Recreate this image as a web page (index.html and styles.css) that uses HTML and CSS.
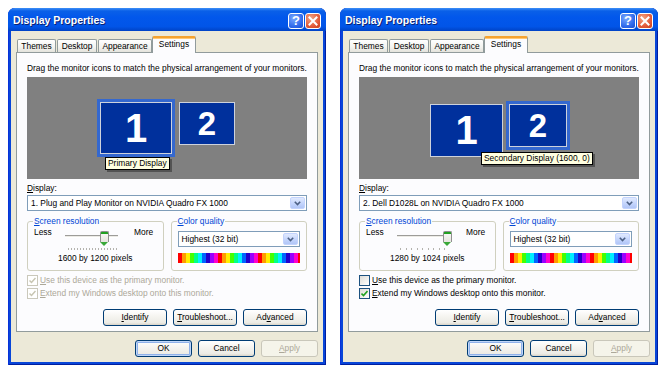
FILE: index.html
```html
<!DOCTYPE html>
<html lang="en">
  <head>
    <meta charset="UTF-8" />
    <title>Display Properties</title>
    <link rel="stylesheet" href="styles.css">
  </head>
  <body>
    <div class="screen">

      <!-- Primary display selected -->
      <div class="dialog">
        <div class="titlebar">
          <span class="title">Display Properties</span>
          <span class="tbtn help">?</span>
          <span class="tbtn close">
            <svg width="10" height="10" viewBox="0 0 10 10"><path d="M1.5 1.5l7 7M8.5 1.5l-7 7" stroke="#fff" stroke-width="2" stroke-linecap="square"/></svg>
          </span>
        </div>
        <div class="client">
          <div class="tabs">
            <span class="tab t-themes">Themes</span>
            <span class="tab t-desktop">Desktop</span>
            <span class="tab t-appear">Appearance</span>
            <span class="tab t-settings active">Settings</span>
          </div>
          <div class="panel">
            <p class="hint">Drag the monitor icons to match the physical arrangement of your monitors.</p>
            <div class="arrange">
              <div class="mon big sel a-m1">1</div>
              <div class="mon small a-m2">2</div>
              <div class="tip a-tip">Primary Display</div>
            </div>
            <div class="field-label"><u>D</u>isplay:</div>
            <div class="combo">
              <span class="combo-text">1. Plug and Play Monitor on NVIDIA Quadro FX 1000</span>
              <span class="drop"><svg width="7" height="5" viewBox="0 0 7 5"><path d="M0.8 0.8l2.7 2.7 2.7-2.7" fill="none" stroke="#4d6185" stroke-width="1.6"/></svg></span>
            </div>
            <div class="groups">
              <fieldset class="group">
                <legend><u>S</u>creen resolution</legend>
                <div class="res-row">
                  <span class="less">Less</span>
                  <div class="slider">
                    <span class="track"></span>
                    <span class="thumb th-a"></span>
                    <span class="ticks ticks-fine"></span>
                  </div>
                  <span class="more">More</span>
                </div>
                <div class="pixels">1600 by 1200 pixels</div>
              </fieldset>
              <fieldset class="group">
                <legend><u>C</u>olor quality</legend>
                <div class="combo small-combo">
                  <span class="combo-text">Highest (32 bit)</span>
                  <span class="drop"><svg width="7" height="5" viewBox="0 0 7 5"><path d="M0.8 0.8l2.7 2.7 2.7-2.7" fill="none" stroke="#4d6185" stroke-width="1.6"/></svg></span>
                </div>
                <div class="colorbar"></div>
              </fieldset>
            </div>
            <div class="check off">
              <span class="box"><svg width="7" height="7" viewBox="0 0 7 7"><path d="M0.5 3.5l2 2 4-4.5" fill="none" stroke="#c7c5b2" stroke-width="1.5"/></svg></span>
              <span><u>U</u>se this device as the primary monitor.</span>
            </div>
            <div class="check off">
              <span class="box"><svg width="7" height="7" viewBox="0 0 7 7"><path d="M0.5 3.5l2 2 4-4.5" fill="none" stroke="#c7c5b2" stroke-width="1.5"/></svg></span>
              <span><u>E</u>xtend my Windows desktop onto this monitor.</span>
            </div>
            <div class="panel-buttons">
              <span class="btn wide"><u>I</u>dentify</span>
              <span class="btn wide"><u>T</u>roubleshoot...</span>
              <span class="btn wide">Ad<u>v</u>anced</span>
            </div>
          </div>
          <div class="dialog-buttons">
            <span class="btn default">OK</span>
            <span class="btn">Cancel</span>
            <span class="btn disabled"><u>A</u>pply</span>
          </div>
        </div>
      </div>

      <!-- Secondary display selected -->
      <div class="dialog">
        <div class="titlebar">
          <span class="title">Display Properties</span>
          <span class="tbtn help">?</span>
          <span class="tbtn close">
            <svg width="10" height="10" viewBox="0 0 10 10"><path d="M1.5 1.5l7 7M8.5 1.5l-7 7" stroke="#fff" stroke-width="2" stroke-linecap="square"/></svg>
          </span>
        </div>
        <div class="client">
          <div class="tabs">
            <span class="tab t-themes">Themes</span>
            <span class="tab t-desktop">Desktop</span>
            <span class="tab t-appear">Appearance</span>
            <span class="tab t-settings active">Settings</span>
          </div>
          <div class="panel">
            <p class="hint">Drag the monitor icons to match the physical arrangement of your monitors.</p>
            <div class="arrange">
              <div class="mon big b-m1">1</div>
              <div class="mon small sel b-m2">2</div>
              <div class="tip b-tip">Secondary Display (1600, 0)</div>
            </div>
            <div class="field-label"><u>D</u>isplay:</div>
            <div class="combo">
              <span class="combo-text">2. Dell D1028L on NVIDIA Quadro FX 1000</span>
              <span class="drop"><svg width="7" height="5" viewBox="0 0 7 5"><path d="M0.8 0.8l2.7 2.7 2.7-2.7" fill="none" stroke="#4d6185" stroke-width="1.6"/></svg></span>
            </div>
            <div class="groups">
              <fieldset class="group">
                <legend><u>S</u>creen resolution</legend>
                <div class="res-row">
                  <span class="less">Less</span>
                  <div class="slider">
                    <span class="track"></span>
                    <span class="thumb th-b"></span>
                    <span class="ticks ticks-wide"></span>
                  </div>
                  <span class="more">More</span>
                </div>
                <div class="pixels">1280 by 1024 pixels</div>
              </fieldset>
              <fieldset class="group">
                <legend><u>C</u>olor quality</legend>
                <div class="combo small-combo">
                  <span class="combo-text">Highest (32 bit)</span>
                  <span class="drop"><svg width="7" height="5" viewBox="0 0 7 5"><path d="M0.8 0.8l2.7 2.7 2.7-2.7" fill="none" stroke="#4d6185" stroke-width="1.6"/></svg></span>
                </div>
                <div class="colorbar"></div>
              </fieldset>
            </div>
            <div class="check">
              <span class="box"></span>
              <span><u>U</u>se this device as the primary monitor.</span>
            </div>
            <div class="check">
              <span class="box"><svg width="7" height="7" viewBox="0 0 7 7"><path d="M0.5 3.5l2 2 4-4.5" fill="none" stroke="#21a121" stroke-width="1.6"/></svg></span>
              <span><u>E</u>xtend my Windows desktop onto this monitor.</span>
            </div>
            <div class="panel-buttons">
              <span class="btn wide"><u>I</u>dentify</span>
              <span class="btn wide"><u>T</u>roubleshoot...</span>
              <span class="btn wide">Ad<u>v</u>anced</span>
            </div>
          </div>
          <div class="dialog-buttons">
            <span class="btn default">OK</span>
            <span class="btn">Cancel</span>
            <span class="btn disabled"><u>A</u>pply</span>
          </div>
        </div>
      </div>

    </div>
  </body>
</html>
```

FILE: styles.css
```css
* {
  box-sizing: border-box;
}
body {
  margin: 0;
  background: #fff;
  color: #000;
  font: 8.4px/11px "Liberation Sans", Arial, sans-serif;
}
u {
  text-decoration: underline;
  text-underline-offset: 1px;
}
.screen {
  display: flex;
  gap: 14px;
  padding: 8px;
}

/* Window frame */
.dialog {
  width: 318px;
  height: 357px;
  display: flex;
  flex-direction: column;
  padding: 0 3px 3px;
  background: #0846d8;
  border-radius: 7px 7px 0 0;
  box-shadow: inset 1px 0 #0831d9, inset -1px 0 #001ea0, inset 0 -1px #001ea0;
}
.titlebar {
  height: 23px;
  margin: 0 -3px;
  padding: 0 5px 0 5px;
  display: flex;
  align-items: center;
  border-radius: 7px 7px 0 0;
  background: linear-gradient(#3d8ff7, #0a60e8 3px, #0257eb 40%, #0155e8 80%, #0043c6);
}
.title {
  flex: 1;
  padding-top: 2px;
  color: #fff;
  font-size: 10.5px;
  font-weight: bold;
  text-shadow: 1px 1px #0b2172;
}
.tbtn {
  width: 16px;
  height: 16px;
  margin-left: 1px;
  margin-top: 2px;
  display: flex;
  align-items: center;
  justify-content: center;
  border: 1px solid #fff;
  border-radius: 3px;
}
.help {
  color: #fff;
  font-size: 13px;
  font-weight: bold;
  background: radial-gradient(circle at 35% 30%, #7aa9ff, #2d67ea 65%, #1a4ccc);
}
.close {
  background: radial-gradient(circle at 35% 30%, #f3a483, #e35b3a 60%, #c63e1c);
}

.client {
  flex: 1;
  padding: 5px 5px 0;
  background: #ece9d8;
}

/* Tabs */
.tabs {
  height: 16px;
  padding-left: 1px;
  display: flex;
  align-items: flex-end;
}
.tab {
  height: 13px;
  margin-right: 1px;
  border: 1px solid #919b9c;
  border-bottom: 0;
  border-radius: 2px 2px 0 0;
  background: linear-gradient(#fff, #f3f3ef 60%, #e4e3dc);
  text-align: center;
  line-height: 12px;
}
.t-themes { width: 39px; }
.t-desktop { width: 40px; }
.t-appear { width: 54px; }
.t-settings { width: 44px; }
.tab.active {
  position: relative;
  z-index: 1;
  height: 17px;
  margin-bottom: -1px;
  margin-left: -1px;
  border-top: 2px solid #f5a330;
  background: #fcfcfe;
  line-height: 13px;
  box-shadow: inset 0 1px #ffc873;
}

.panel {
  height: 280px;
  padding: 0 10px;
  border: 1px solid #919b9c;
  background: #fcfcfe;
}
.hint {
  margin: 10px 0 0;
  white-space: nowrap;
}

/* Monitor arrangement */
.arrange {
  position: relative;
  height: 102px;
  margin-top: 3px;
  background: #808080;
}
.mon {
  position: absolute;
  display: flex;
  align-items: center;
  justify-content: center;
  border: 1px solid #cdd2dc;
  background: #00309c;
  color: #fff;
  font-weight: bold;
}
.mon.big { font-size: 40px; }
.mon.small { font-size: 33px; }
.mon.sel {
  box-shadow: 0 0 0 3px #3468cf;
}
.a-m1 { left: 73px; top: 25px; width: 72px; height: 52px; }
.a-m2 { left: 152px; top: 25px; width: 56px; height: 43px; }
.b-m1 { left: 71px; top: 27px; width: 73px; height: 53px; }
.b-m2 { left: 150px; top: 27px; width: 58px; height: 43px; }
.tip {
  position: absolute;
  z-index: 2;
  height: 13px;
  padding: 0 2px;
  border: 1px solid #000;
  background: #ffffe1;
  line-height: 11px;
  white-space: nowrap;
  box-shadow: 2px 2px 0 rgba(0, 0, 0, 0.35);
}
.a-tip { left: 78px; top: 80px; }
.b-tip { left: 122px; top: 75px; }

.field-label {
  margin-top: 4px;
}

/* Combo boxes */
.combo {
  height: 16px;
  margin-top: 1px;
  padding: 0 1px 0 3px;
  display: flex;
  align-items: center;
  border: 1px solid #7f9db9;
  background: #fff;
}
.combo-text {
  flex: 1;
}
.drop {
  width: 15px;
  height: 12px;
  display: flex;
  align-items: center;
  justify-content: center;
  border: 1px solid #c3d3fd;
  border-radius: 2px;
  background: linear-gradient(#e1eafe, #c2d3fc 60%, #b1c6f7);
}

/* Group boxes */
.groups {
  margin-top: 5px;
  display: flex;
  gap: 7px;
}
.group {
  width: 137px;
  height: 55px;
  margin: 0;
  padding: 0 6px;
  border: 1px solid #d0d0bf;
  border-radius: 3px;
}
.group legend {
  margin-left: -1px;
  padding: 0 1px;
  color: #0046d5;
  line-height: 11px;
}
.res-row {
  display: flex;
  align-items: flex-start;
}
.less {
  width: 31px;
}
.slider {
  position: relative;
  width: 53px;
  height: 22px;
  margin-top: 2px;
}
.track {
  position: absolute;
  left: 0;
  right: 0;
  top: 6px;
  height: 3px;
  border-top: 1px solid #9d9c99;
  border-bottom: 1px solid #fff;
  background: #ecebe6;
}
.thumb {
  position: absolute;
  top: 2px;
  width: 9px;
  height: 11px;
  border: 1px solid #8f8f8f;
  border-bottom: 0;
  border-radius: 2px 2px 0 0;
  background: linear-gradient(#21a121, #21a121 2px, #f6f6f3 2px, #e6e5df);
}
.thumb::after {
  content: "";
  position: absolute;
  left: -1px;
  bottom: -4px;
  border-left: 4.5px solid transparent;
  border-right: 4.5px solid transparent;
  border-top: 4px solid #3aa83a;
}
.th-a { left: 35px; }
.th-b { left: 46px; }
.ticks {
  position: absolute;
  top: 19px;
  left: 3px;
  right: 1px;
  height: 2px;
}
.ticks-fine {
  background: repeating-linear-gradient(to right, #b4b3ae 0 1px, transparent 1px 3px);
}
.ticks-wide {
  background: repeating-linear-gradient(to right, #b4b3ae 0 1px, transparent 1px 5.5px);
}
.more {
  margin-left: 16px;
}
.pixels {
  margin-top: 2px;
  text-align: center;
}
.small-combo {
  margin-top: 4px;
}
.colorbar {
  height: 10px;
  margin-top: 6px;
  background: linear-gradient(to right,
    #ff0000 0 4px, #ff9900 4px 8px, #ffee00 8px 12px, #44ff00 12px 16px,
    #00ff88 16px 20px, #00eeff 20px 24px, #0066ff 24px 28px, #2200cc 28px 32px,
    #9900ff 32px 36px, #ff00cc 36px 40px);
  background-size: 40px 10px;
}

/* Check boxes */
.check {
  height: 13px;
  display: flex;
  align-items: center;
}
.groups + .check {
  margin-top: 3px;
}
.box {
  width: 11px;
  height: 11px;
  margin-right: 2px;
  display: flex;
  align-items: center;
  justify-content: center;
  border: 1px solid #1c5180;
  background: linear-gradient(135deg, #dcdcd7, #fff);
}
.check.off {
  color: #aca899;
}
.check.off .box {
  border-color: #cac8bb;
  background: #fff;
}

/* Push buttons */
.btn {
  width: 57px;
  height: 17px;
  display: inline-block;
  border: 1px solid #003c74;
  border-radius: 3px;
  background: linear-gradient(#fff, #f6f5f1 40%, #ecebe5 85%, #d8d2c6);
  text-align: center;
  line-height: 15px;
}
.btn.wide {
  width: 64px;
}
.btn.default {
  box-shadow: inset 0 0 0 1px #c0d6f8, inset 0 0 0 2px #8fb1ea;
}
.btn.disabled {
  border-color: #c9c7ba;
  background: #f5f4ea;
  color: #aca899;
}
.panel-buttons {
  margin-top: 9px;
  display: flex;
  justify-content: flex-end;
  gap: 6px;
}
.dialog-buttons {
  margin-top: 8px;
  display: flex;
  justify-content: flex-end;
  gap: 6px;
}
```
